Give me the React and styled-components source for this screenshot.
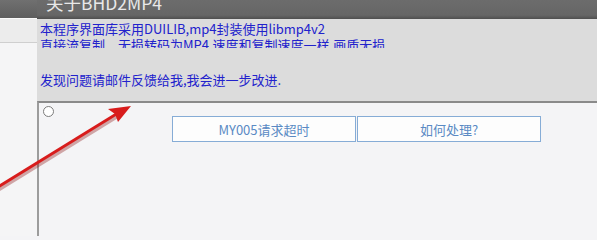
import React from "react";
import styled, { createGlobalStyle } from "styled-components";

// 全局
const GlobalStyle = createGlobalStyle`
  html, body {
    margin: 0;
    padding: 0;
    background: #f4f4f6;
    font-family: "Noto Sans CJK SC", "Noto Sans", sans-serif;
    overflow: hidden;
  }
`;

const Page = styled.div`
  position: relative;
  display: flex;
  width: 597px;
  height: 236px;
  overflow: hidden;
`;

// 左边的窗口
const SidePane = styled.div`
  width: 37px;
  display: flex;
  flex-direction: column;
  flex-shrink: 0;
`;

const SideBar = styled.div`
  height: 18px;
  background: linear-gradient(#707070, #5e5e5e);
`;

const SideStrip = styled.div`
  height: 23px;
  background: #ececec;
  border-top: 1px solid #fafafa;
  border-bottom: 1px solid #cfcfcf;
`;

const SideBody = styled.div`
  flex: 1;
  background: #f5f5f6;
`;

// 关于窗口
const Dialog = styled.div`
  flex: 1;
  display: flex;
  flex-direction: column;
`;

const TitleBar = styled.div`
  height: 19px;
  background: linear-gradient(#6c6c6c 0%, #666 80%, #4f4f4f 100%);
  overflow: hidden;
  padding-left: 9px;
`;

const Title = styled.div`
  margin-top: -8px;
  color: #e8e8e8;
  font-size: 17.5px;
  line-height: 22px;
  white-space: nowrap;
`;

const InfoPanel = styled.div`
  height: 82px;
  background: #dcdcdc;
  padding: 2px 0 0 3px;
  box-sizing: border-box;
  color: #2222cc;
  font-size: 13px;
`;

const InfoLine = styled.div`
  height: ${(p) => p.$h}px;
  line-height: 16px;
  overflow: hidden;
  white-space: nowrap;
`;

const Content = styled.div`
  flex: 1;
  background: #f4f4f6;
  border-top: 2px solid #8a8a8a;
  border-left: 2px solid #9c9c9c;
  padding: 3px 0 0 4px;
  display: flex;
  flex-direction: column;
`;

const Radio = styled.span`
  width: 9px;
  height: 9px;
  border: 1px solid #7c7c7c;
  border-radius: 50%;
  background: #fff;
`;

const ButtonRow = styled.div`
  display: flex;
  margin: -1px 0 0 129px;
`;

const Button = styled.button`
  width: 184px;
  height: 26px;
  margin-right: 1px;
  background: #fdfdfd;
  border: 1px solid #86acd6;
  color: #5a8ac4;
  font-family: "Noto Sans CJK SC", "Noto Sans", sans-serif;
  font-size: 13px;
  padding: 0;
  cursor: pointer;
`;

// 红色箭头
const Arrow = styled.svg`
  position: absolute;
  left: 0;
  top: 0;
  pointer-events: none;
`;

const App = () => {
  return (
    <>
      <GlobalStyle />
      <Page>
        <SidePane>
          <SideBar />
          <SideStrip />
          <SideBody />
        </SidePane>
        <Dialog>
          <TitleBar>
            <Title>关于BHD2MP4</Title>
          </TitleBar>
          <InfoPanel>
            <InfoLine $h={16}>本程序界面库采用DUILIB,mp4封装使用libmp4v2</InfoLine>
            <InfoLine $h={11}>直接流复制，无损转码为MP4.速度和复制速度一样.画质无损.</InfoLine>
            <InfoLine $h={24} />
            <InfoLine $h={16}>发现问题请邮件反馈给我,我会进一步改进.</InfoLine>
          </InfoPanel>
          <Content>
            <Radio />
            <ButtonRow>
              <Button>MY005请求超时</Button>
              <Button>如何处理?</Button>
            </ButtonRow>
          </Content>
        </Dialog>
        <Arrow width="597" height="236" viewBox="0 0 597 236">
          <line x1="-2" y1="188" x2="118" y2="114" stroke="#8a1010" strokeOpacity="0.35" strokeWidth="3.5" transform="translate(1 1.5)" />
          <line x1="-2" y1="187" x2="118" y2="113" stroke="#d81c1c" strokeWidth="2.8" />
          <polygon points="131,106 108,109 115,114 118,122" fill="#d81c1c" />
        </Arrow>
      </Page>
    </>
  );
};

export default App;
